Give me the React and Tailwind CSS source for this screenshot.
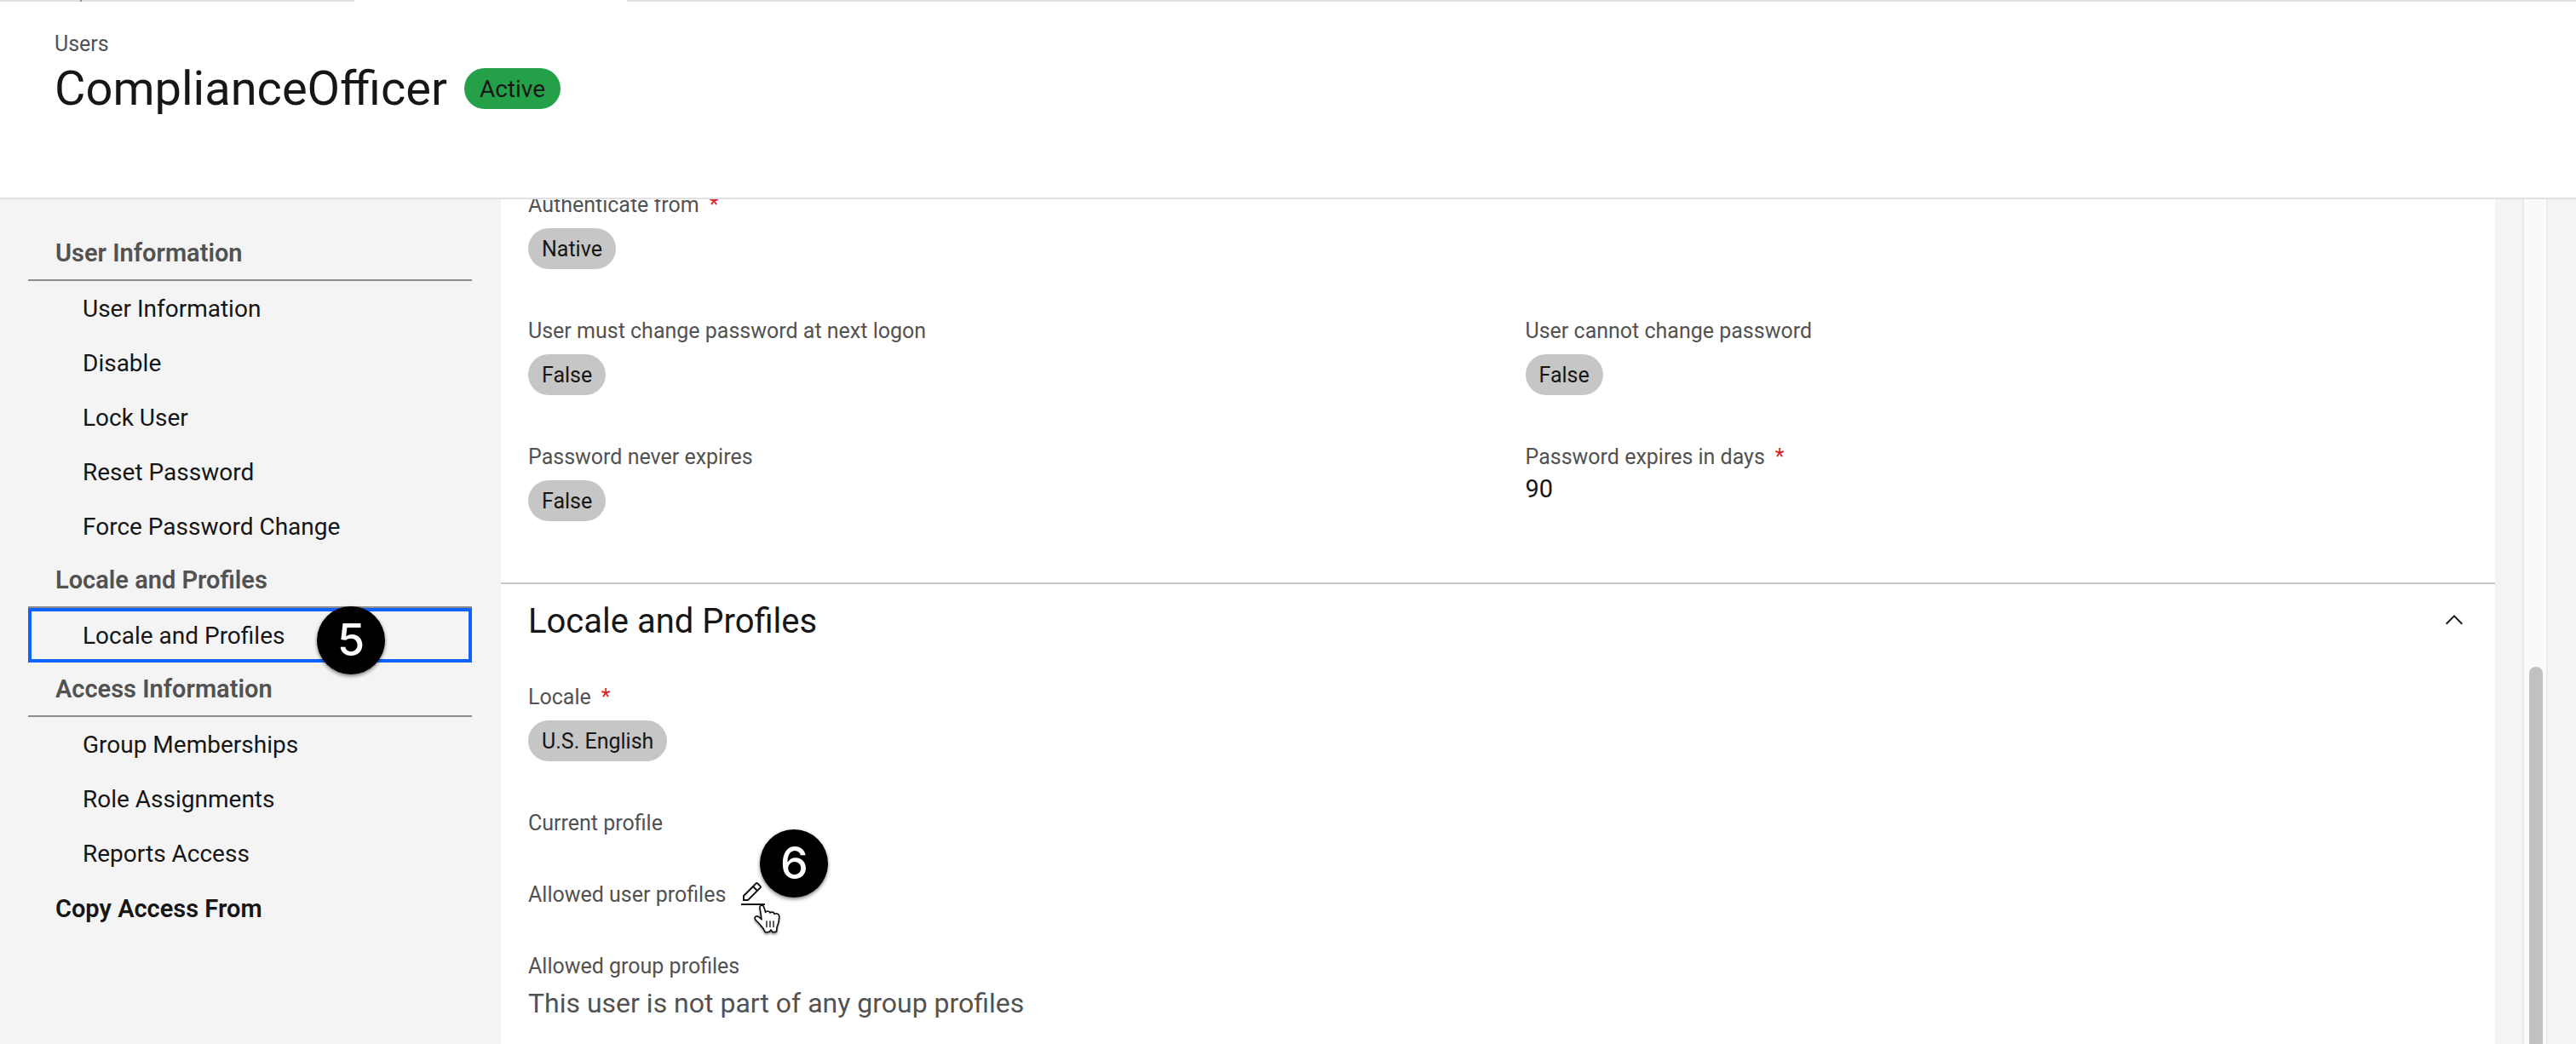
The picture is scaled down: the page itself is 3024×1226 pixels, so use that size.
const sections = [
  {
    title: "User Information",
    items: ["User Information", "Disable", "Lock User", "Reset Password", "Force Password Change"],
  },
  { title: "Locale and Profiles", items: ["Locale and Profiles"], selected: "Locale and Profiles", step: "5" },
  { title: "Access Information", items: ["Group Memberships", "Role Assignments", "Reports Access"] },
];

function StepBadge({ children, className }) {
  return (
    <span
      className={`absolute flex size-20 items-center justify-center rounded-full bg-black font-['Inter',sans-serif] text-[52px] font-medium leading-none text-white shadow-[0_2px_4px_rgba(0,0,0,0.5)] ${className}`}
    >
      {children}
    </span>
  );
}

function Tag({ children }) {
  return (
    <span className="inline-flex h-12 items-center rounded-full bg-[#c6c6c6] px-4 pt-0.5 text-[25px] leading-8 text-[#161616]">
      {children}
    </span>
  );
}

function Field({ label, required, action, children, className = "" }) {
  return (
    <div className={className}>
      <dt className="flex h-8 items-center text-[25px] leading-9 text-[#525252]">
        <span className="pt-0.5">{label}</span>
        {required && <span className="ml-3 pt-0.5 text-[#da1e28]">*</span>}
        {action}
      </dt>
      {children && <dd>{children}</dd>}
    </div>
  );
}

function TagField({ value, ...rest }) {
  return (
    <Field {...rest}>
      <div className="flex pt-3">
        <Tag>{value}</Tag>
      </div>
    </Field>
  );
}

function EditIcon() {
  return (
    <svg viewBox="0 0 32 32" className="size-8" fill="#161616" aria-hidden="true">
      <path d="M2 27h28v2H2zM25.400 9c.8-.8.8-2 0-2.800l-3.600-3.600c-.8-.8-2-.8-2.800 0l-15 15V24h6.400l15-15zm-5-5L24 7.600l-3 3L17.400 7l3-3zM6 22v-3.600l10-10 3.600 3.600-10 10H6z" />
    </svg>
  );
}

function HandCursor() {
  return (
    <svg
      viewBox="75 95 96 108"
      className="pointer-events-none absolute left-[17px] top-7 h-9 w-8 drop-shadow-[0_2px_1px_rgba(0,0,0,0.4)]"
      aria-hidden="true"
    >
      <path
        d="M96 107c-2-9 11-12 14-3l6 19c3-6 14-5 16 2 4-5 14-3 15 4 6-4 16-1 17 7 1 14-2 26-8 40l-1 14c-5 3-11 3-15 2l-5-7-6 7c-5 2-11 1-15 0-3-10-9-17-16-24-6-8-14-14-18-20-5-8 4-15 12-9l10 9z"
        fill="#fff"
        stroke="#111"
        strokeWidth="5"
        strokeLinejoin="round"
      />
      <path d="M120 153v23M132 153v23M144 153v23" stroke="#111" strokeWidth="4" fill="none" />
    </svg>
  );
}

function Sidebar() {
  return (
    <nav aria-label="User sections" className="w-[588px] shrink-0 bg-[#f4f4f4] pl-[33px] pr-[34px] pt-8">
      {sections.map((section) => (
        <section key={section.title}>
          <h2 className="flex h-16 items-center border-b-2 border-[#8d8d8d] px-8 text-[29px] font-semibold leading-9 text-[#525252]">
            {section.title}
          </h2>
          <ul>
            {section.items.map((item) => (
              <li key={item} className="relative">
                <a
                  href="#section"
                  className={`flex h-16 items-center border-4 px-[60px] pt-0.5 text-[28px] leading-9 text-[#161616] ${
                    section.selected === item ? "border-[#0f62fe]" : "border-transparent"
                  }`}
                >
                  {item}
                </a>
                {section.step && <StepBadge className="-top-0.5 left-[339px]">{section.step}</StepBadge>}
              </li>
            ))}
          </ul>
        </section>
      ))}
      <a href="#copy" className="flex h-16 items-center px-8 pt-0.5 text-[29px] font-semibold leading-9 text-[#161616]">
        Copy Access From
      </a>
    </nav>
  );
}

export default function App() {
  return (
    <div className="flex h-screen flex-col overflow-hidden bg-white font-['Roboto',sans-serif] text-[#161616]">
      <div className="flex h-0.5 shrink-0">
        <div className="w-[94px] bg-[#e0e0e0]" />
        <div className="w-0.5 bg-[#8d8d8d]" />
        <div className="w-80 bg-[#e0e0e0]" />
        <div className="w-80" />
        <div className="flex-1 bg-[#e0e0e0]" />
      </div>
      <header className="h-[232px] shrink-0 border-b-2 border-[#e0e0e0] px-16 pt-[34px]">
        <a href="#users" className="block text-[25px] leading-8 text-[#525252]">
          Users
        </a>
        <div className="flex items-center gap-5">
          <h1 className="text-[56px] leading-[72px]">ComplianceOfficer</h1>
          <span className="inline-flex h-12 items-center rounded-full bg-[#24a148] px-[18px] pt-0.5 text-[28px] leading-9">
            Active
          </span>
        </div>
      </header>

      <div className="flex min-h-0 flex-1">
        <Sidebar />
        <main className="min-w-0 flex-1 overflow-hidden">
          <dl className="-mt-2.5 grid grid-cols-2 gap-x-16 gap-y-14 px-8 pb-[72px]">
            <TagField label="Authenticate from" required value="Native" className="col-span-2" />
            <TagField label="User must change password at next logon" value="False" />
            <TagField label="User cannot change password" value="False" />
            <TagField label="Password never expires" value="False" />
            <Field label="Password expires in days" required>
              <p className="pt-1 text-[29px] leading-9">90</p>
            </Field>
          </dl>

          <section className="border-t-2 border-[#c6c6c6]">
            <div className="flex h-[88px] items-center justify-between px-8">
              <h2 className="text-[40px] leading-[52px]">Locale and Profiles</h2>
              <button type="button" aria-label="Collapse Locale and Profiles" className="flex size-8 items-center justify-center">
                <svg viewBox="0 0 32 32" className="size-8" fill="#161616" aria-hidden="true">
                  <path d="M16 8l10 10-1.400 1.400L16 10.800l-8.600 8.600L6 18z" />
                </svg>
              </button>
            </div>
            <dl className="px-8 pt-7">
              <TagField label="Locale" required value="U.S. English" className="mb-14" />
              <Field label="Current profile" className="mb-[52px]" />
              <Field
                label="Allowed user profiles"
                className="mb-[52px]"
                action={
                  <span className="relative ml-4 flex">
                    <button type="button" aria-label="Edit allowed user profiles">
                      <EditIcon />
                    </button>
                    <StepBadge className="-top-[60px] left-6">6</StepBadge>
                    <HandCursor />
                  </span>
                }
              />
              <Field label="Allowed group profiles">
                <p className="pt-2 text-[32px] leading-10 text-[#525252]">This user is not part of any group profiles</p>
              </Field>
            </dl>
          </section>
        </main>
        <div className="flex shrink-0 bg-[#f4f4f4] pl-8 pr-[33px]">
          <div className="flex w-[30px] flex-col border-x-2 border-l-[#e8e8e8] border-r-[#ededed] bg-[#fafafa] pl-1.5 pr-1 pt-[549px]">
            <div className="w-4 flex-1 rounded-t-full bg-[#c1c1c1]" />
          </div>
        </div>
      </div>
    </div>
  );
}
